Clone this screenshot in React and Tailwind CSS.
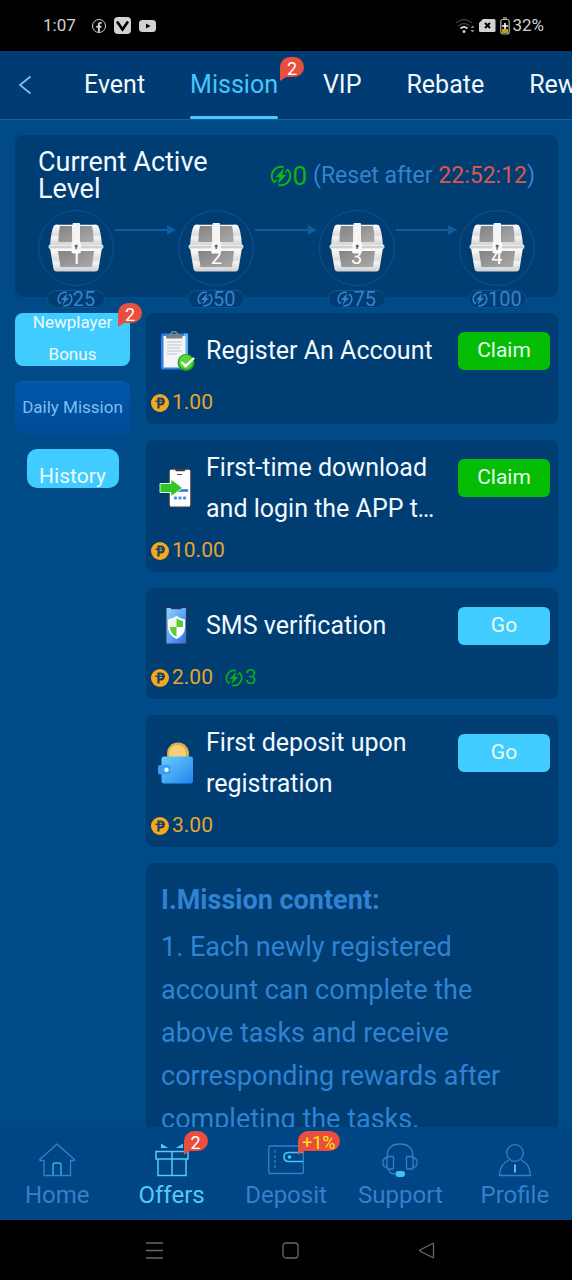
import React, { useState } from 'react';
import { FaFacebookF } from 'react-icons/fa';

const TABS = [
  { label: 'Event' },
  { label: 'Mission', badge: '2' },
  { label: 'VIP' },
  { label: 'Rebate' },
  { label: 'Rewards' },
];

const LEVELS = [
  { level: 1, points: 25 },
  { level: 2, points: 50 },
  { level: 3, points: 75 },
  { level: 4, points: 100 },
];

const MISSIONS = [
  { title: 'Register An Account', icon: ClipboardArt, cash: '1.00', action: 'Claim' },
  { title: 'First-time download and login the APP to get rewards', icon: LoginArt, cash: '10.00', action: 'Claim' },
  { title: 'SMS verification', icon: ShieldArt, cash: '2.00', points: 3, action: 'Go' },
  { title: 'First deposit upon registration', icon: WalletArt, cash: '3.00', action: 'Go' },
];

const NAV = [
  { label: 'Home', icon: HomeIcon },
  { label: 'Offers', icon: GiftIcon, badge: '2' },
  { label: 'Deposit', icon: DepositIcon, badge: '+1%' },
  { label: 'Support', icon: SupportIcon },
  { label: 'Profile', icon: ProfileIcon },
];

function Badge({ children, className = '' }) {
  return (
    <span
      className={`absolute flex h-5 min-w-6 items-center justify-center rounded-full rounded-bl-none bg-[#ea4e3d] px-1 pt-1 text-lg leading-5 after:absolute after:top-full after:left-0 after:h-1 after:w-1.5 after:bg-[#ea4e3d] after:[clip-path:polygon(0_0,100%_0,0_100%)] ${className}`}
    >
      {children}
    </span>
  );
}

function EnergyIcon({ className }) {
  return (
    <svg viewBox="0 0 20 20" className={className} fill="none" stroke="currentColor" strokeWidth="1.900">
      <path d="M12.300 1.900A8.500 8.500 0 0 0 4 16M7.700 18.100A8.500 8.500 0 0 0 16 4" />
      <path d="M12.800 2.800 5 11.200h3.800L7 17.200l8-8.400h-3.800z" fill="currentColor" stroke="none" />
      <path d="M3.600 16.400 6.200 13.200M16.400 3.600 13.800 6.800" strokeWidth="1.200" />
    </svg>
  );
}

function PesoCoin() {
  return (
    <svg viewBox="0 0 18 18" className="mr-[3px] size-[18px]">
      <circle cx="9" cy="9" r="9" fill="#f5a81c" />
      <path d="M7.500 14.500V4.500h2.300a2.900 2.900 0 0 1 0 5.800H7.500" fill="none" stroke="#17406a" strokeWidth="2.200" />
      <path d="M4.300 7.300H14" stroke="#17406a" strokeWidth="1.300" />
    </svg>
  );
}

function Chest({ id }) {
  return (
    <svg viewBox="0 0 56 50" className="h-[50px] w-14">
      <defs>
        <linearGradient id={`shell-${id}`} x1="0" y1="0" x2="0" y2="1">
          <stop offset="0" stopColor="#fff" />
          <stop offset="0.5" stopColor="#dcdcdc" />
          <stop offset="0.6" stopColor="#f4f4f4" />
          <stop offset="1" stopColor="#cfcfcf" />
        </linearGradient>
        <linearGradient id={`panel-${id}`} x1="0" y1="0" x2="1" y2="1">
          <stop offset="0" stopColor="#838383" />
          <stop offset="1" stopColor="#aaa" />
        </linearGradient>
      </defs>
      <path d="M6 2.500Q3 8 2 22.500h52Q53 8 50 2.500q-2-1.500-5-.8H11q-3-.7-5 .8z" fill={`url(#shell-${id})`} />
      <path d="M2 25h52l-3.500 21q-.7 2.500-3 2.500H8.500q-2.300 0-3-2.500z" fill={`url(#shell-${id})`} />
      <path d="M12 3h12v16H10.500Q10.500 9 12 3zM32 3h12q1.500 6 1.500 16H32z" fill={`url(#panel-${id})`} />
      <path d="M10 28h36l-2 16H12.500z" fill={`url(#panel-${id})`} />
      <rect x="0.500" y="21.500" width="55" height="4.500" rx="2" fill="#e9e9e9" />
      <path d="M1 24h54" stroke="#aaa" strokeWidth="0.800" />
      <rect x="24.500" width="7.500" height="22" rx="1" fill="#f4f4f4" />
      <rect x="23.500" y="18.500" width="9.500" height="12" rx="2" fill="#f8f8f8" />
      <circle cx="28.200" cy="23" r="1.600" fill="#666" />
      <path d="M28.200 23v4" stroke="#666" strokeWidth="1.400" />
    </svg>
  );
}

function ClipboardArt() {
  return (
    <svg viewBox="0 0 40 40" className="size-10 shrink-0">
      <rect x="5" y="2.500" width="27" height="36" rx="1.500" fill="#2f7fe6" />
      <path d="M28 2.500h3q1 0 1 1V32h-4z" fill="#59b3f8" />
      <path d="M7.500 5h22v27l-4 4.500h-18z" fill="#f4f4f6" />
      <path d="M11 11h15M11 14h15M11 17h13M11 20h15M11 23h10" stroke="#b9bcc4" strokeWidth="0.900" />
      <path d="M14.500 4a3.500 3.500 0 0 1 7 0" fill="none" stroke="#8d8a80" strokeWidth="1.500" />
      <rect x="10" y="3.500" width="16.500" height="4" rx="1" fill="#77808b" />
      <circle cx="30" cy="31.500" r="8.500" fill="#25a526" />
      <circle cx="30" cy="31" r="7" fill="#5dd33b" />
      <path d="m25.500 31 4 4 8.500-8" fill="none" stroke="#fff" strokeWidth="2.400" />
    </svg>
  );
}

function LoginArt() {
  return (
    <svg viewBox="0 0 40 40" className="size-10 shrink-0">
      <rect x="12.500" y="0.500" width="23" height="39.500" rx="3" fill="#333c4c" />
      <path d="M15 1.800h4l1 1.500h8.500l1-1.500H33q1.200 0 1.200 1.200v34q0 1.500-1.200 1.500H15q-1.200 0-1.200-1.500V3q0-1.200 1.200-1.200z" fill="#fdfdff" />
      <path d="M21 6.500h5" stroke="#555" strokeWidth="1" />
      <path d="M20 22.500h12" stroke="#3c72dc" strokeWidth="2.600" />
      <circle cx="19.500" cy="30" r="1.700" fill="#4c91ea" />
      <circle cx="24" cy="30" r="1.700" fill="#4c91ea" />
      <circle cx="28.500" cy="30" r="1.700" fill="#4c91ea" />
      <path d="M4 15.500h11V11L26.500 20 15 28.500V24.500H4z" fill="#34c424" stroke="#f2fff0" strokeWidth="0.900" />
    </svg>
  );
}

function ShieldArt() {
  return (
    <svg viewBox="0 0 40 40" className="size-10 shrink-0">
      <defs>
        <linearGradient id="sms-screen" x1="0" y1="0" x2="1" y2="1">
          <stop offset="0" stopColor="#8fd0fb" />
          <stop offset="0.500" stopColor="#5ca7f5" />
          <stop offset="1" stopColor="#356bdc" />
        </linearGradient>
      </defs>
      <rect x="9" y="0.500" width="22.500" height="39" rx="2.500" fill="#20365f" />
      <path d="M10.500 2h4l1 1.300h9.500L26 2h4v35.500H10.500z" fill="url(#sms-screen)" />
      <path d="M20.500 10q4 3 8.500 3.500V21q0 8-8.500 12-8.500-4-8.500-12v-7.500Q16.500 13 20.500 10z" fill="#fff" />
      <path d="M20.500 12.200V21H14v-6q3.500-.5 6.500-2.800z" fill="#e6f5e5" />
      <path d="M20.500 12.200q3 2.300 6.500 2.800v6h-6.500zM14 21h6.500v9.800Q14 27.500 14 21z" fill="#5ccc35" />
    </svg>
  );
}

function WalletArt() {
  return (
    <svg viewBox="0 0 40 42" className="h-[42px] w-10 shrink-0">
      <defs>
        <linearGradient id="wallet-body" x1="0" y1="0" x2="1" y2="1">
          <stop offset="0" stopColor="#69cefc" />
          <stop offset="1" stopColor="#2483f2" />
        </linearGradient>
      </defs>
      <circle cx="22" cy="11.500" r="11" fill="#e3ad4d" />
      <circle cx="21.500" cy="11.500" r="8.500" fill="#f5cf78" />
      <rect x="5.500" y="14.500" width="31.500" height="27" rx="2.500" fill="url(#wallet-body)" />
      <rect x="2" y="23" width="12.500" height="9.500" rx="2" fill="#3d9cf4" />
      <circle cx="10.500" cy="27.800" r="2.200" fill="#f2fbff" />
    </svg>
  );
}

function HomeIcon() {
  return (
    <svg viewBox="0 0 36 34" className="h-[34px] w-9" fill="none" stroke="currentColor" strokeWidth="1.300" strokeLinejoin="round">
      <path d="M18 1 .8 16.500q-.4 1 .6 1H5V32.500h26.500v-15H35q1 0 .4-1z" />
      <path d="M14 32V22q0-2 2-2h4q2 0 2 2v10" stroke="#41b8f4" />
    </svg>
  );
}

function GiftIcon() {
  return (
    <svg viewBox="0 0 36 34" className="h-[34px] w-9" fill="none" stroke="currentColor" strokeWidth="1.500">
      <path d="M2 8.500h32v7.500H2zM4 16h28v16.500H4zM18 8.500v24" />
      <path d="M7 .5 14 5H7zM29 .5 22 5h7z" fill="currentColor" stroke="none" />
    </svg>
  );
}

function DepositIcon() {
  return (
    <svg viewBox="0 0 36 34" className="h-[34px] w-9" fill="none" stroke="currentColor" strokeWidth="1.300">
      <rect x="0.800" y="3" width="34.500" height="27.500" rx="1" />
      <path d="M7 7v20" strokeDasharray="3 2" />
      <path d="M35 9.500H21q-5 0-5 4.500t5 4.500h14" stroke="#45c8fa" strokeWidth="1.600" />
      <circle cx="21.500" cy="14" r="1.800" fill="#45c8fa" stroke="none" />
    </svg>
  );
}

function SupportIcon() {
  return (
    <svg viewBox="0 0 36 34" className="h-[34px] w-9" fill="none" stroke="currentColor" strokeWidth="1.300">
      <path d="M5 14Q5 1 18 1t13 13M7 26q0 5 6 5" />
      <rect x="5" y="13.500" width="6.500" height="12.500" rx="1" />
      <rect x="24.500" y="13.500" width="6.500" height="12.500" rx="1" />
      <path d="M5 14.500q-4 .5-4 5t4 5M31 14.500q4 .5 4 5t-4 5" />
      <rect x="13.500" y="28" width="9.500" height="6" rx="3" fill="#45c0f6" stroke="none" />
    </svg>
  );
}

function ProfileIcon() {
  return (
    <svg viewBox="0 0 36 34" className="h-[34px] w-9" fill="none" stroke="currentColor" strokeWidth="1.300">
      <circle cx="18" cy="10" r="8.300" />
      <path d="M12 17Q3 21 2.500 32.500h31Q33 21 24 17" />
      <path d="M18 21.500v8" stroke="#45c0f6" strokeWidth="2" />
    </svg>
  );
}

function StatusBar() {
  return (
    <div className="flex h-[51px] shrink-0 items-center bg-black pr-7 pl-[43px] text-[17px] text-[#d2d2d2]">
      <span className="mr-4">1:07</span>
      <div className="flex items-center gap-2">
        <span className="flex size-3.5 items-end justify-center overflow-hidden rounded-full border border-[#d2d2d2]">
          <FaFacebookF size={10} />
        </span>
        <svg viewBox="0 0 17 17" className="size-[17px]">
          <rect width="17" height="17" rx="4" fill="#d2d2d2" />
          <path d="m3 4.500 5.500 8L14 4.500" fill="none" stroke="#000" strokeWidth="2.600" />
        </svg>
        <svg viewBox="0 0 17 12" className="h-3 w-[17px]">
          <rect width="17" height="12" rx="3.500" fill="#d2d2d2" />
          <path d="m7 3.500 4.500 2.500L7 8.500z" fill="#000" />
        </svg>
      </div>
      <div className="ml-auto flex items-center gap-1">
        <svg viewBox="0 0 20 16" className="h-4 w-5" fill="none" strokeWidth="1.600">
          <path d="M1 5q8-7 16 0M3.500 8q5.500-5 11 0" stroke="#3a3a3a" />
          <path d="M5.500 10.500q3.500-3 7 0" stroke="#d2d2d2" strokeWidth="2" />
          <circle cx="9" cy="13.500" r="1.500" fill="#d2d2d2" />
          <path d="m15.500 10 2-2.500 2 2.500zM15.500 12l2 2.500 2-2.500z" fill="#8a8a8a" />
        </svg>
        <svg viewBox="0 0 17 13" className="h-[13px] w-[17px]">
          <path d="M4 0h11q1.500 0 1.500 1.500v10q0 1.500-1.500 1.500H1.500Q0 13 0 11.500V4z" fill="#d2d2d2" />
          <path d="m6 4 5 5m0-5L6 9" stroke="#000" strokeWidth="2" />
        </svg>
        <svg viewBox="0 0 10 18" className="h-[18px] w-2.5">
          <path d="M3 1h4" stroke="#999" strokeWidth="1.500" />
          <rect x="0.800" y="2.500" width="8.400" height="14.500" rx="2" fill="none" stroke="#b5b5a5" strokeWidth="1.200" />
          <path d="M2 12h6v4H2z" fill="#b9a022" />
          <path d="M5 6v6M2 9h6" stroke="#fff" strokeWidth="1.600" />
        </svg>
        <span className="-ml-0.5">32%</span>
      </div>
    </div>
  );
}

function TabBar({ active, onChange }) {
  return (
    <header className="flex h-[69px] shrink-0 items-stretch border-b border-[#1c5c98] bg-[#003c73]">
      <button aria-label="Back" className="w-[62px] shrink-0 pl-[18px] text-[#7cbcf3]">
        <svg viewBox="0 0 14 20" className="h-5 w-3.5" fill="none" stroke="currentColor" strokeWidth="1.800">
          <path d="M12.500 1.500 2 10l10.500 8.500" />
        </svg>
      </button>
      <nav className="flex min-w-0 flex-1 gap-px overflow-hidden">
        {TABS.map((tab) => (
          <button
            key={tab.label}
            onClick={() => onChange(tab.label)}
            className={`relative shrink-0 px-[22px] text-[25px] ${tab.label === active ? 'text-[#45c6fc]' : 'text-[#f0f7fd]'}`}
          >
            {tab.label}
            {tab.badge && <Badge className="top-1.5 -right-1 text-white">{tab.badge}</Badge>}
            {tab.label === active && (
              <span className="absolute inset-x-[22px] bottom-0 h-[3px] rounded-full bg-[#41cbff]" />
            )}
          </button>
        ))}
      </nav>
    </header>
  );
}

function LevelCard() {
  return (
    <section className="h-[162px] rounded-lg bg-[#003d72] px-[23px] pt-3.5">
      <div className="flex h-[54px] items-center justify-between">
        <h2 className="w-48 text-[27px] leading-[27px] text-[#f2f9ff]">Current Active Level</h2>
        <div className="flex items-center text-[23px] whitespace-nowrap text-[#3782cc]">
          <EnergyIcon className="size-[22px] text-[#0bb714]" />
          <span className="mr-1.5 text-[26px] text-[#0bb714]">0</span>
          <span>
            (Reset after <span className="text-[#d9574f]">22:52:12</span>)
          </span>
        </div>
      </div>
      <ol className="mt-[7px] flex">
        {LEVELS.map((item, i) => (
          <React.Fragment key={item.level}>
            {i > 0 && (
              <li aria-hidden="true" className="mt-4 flex h-2 flex-1 items-center text-[#0e5ea4]">
                <span className="ml-px h-0.5 flex-1 bg-current" />
                <svg viewBox="0 0 9 10" className="mr-0.5 h-2.5 w-[9px]">
                  <path d="M0 0 9 5 0 10z" fill="currentColor" />
                </svg>
              </li>
            )}
            <li className="flex w-[76px] shrink-0 flex-col items-center">
              <div className="relative flex size-[76px] items-center justify-center rounded-full border border-[#11528d]">
                <Chest id={item.level} />
                <span className="absolute inset-x-0 top-[34px] text-center text-xl leading-6 text-white">{item.level}</span>
              </div>
              <div className="mt-1 flex h-[18px] min-w-[58px] items-center justify-center rounded-full border border-[#11528d] bg-[#003d72] text-xl text-[#3782cc]">
                <EnergyIcon className="size-4" />
                {item.points}
              </div>
            </li>
          </React.Fragment>
        ))}
      </ol>
    </section>
  );
}

function Sidebar() {
  return (
    <aside className="flex w-[115px] shrink-0 flex-col items-center gap-[15px] text-[17px]">
      <button className="relative flex h-[53px] w-full items-center justify-center rounded-lg bg-[#41ccff] pb-1 leading-8 text-[#eefaff]">
        <span className="px-3">Newplayer Bonus</span>
        <Badge className="-top-2.5 -right-3 text-white">2</Badge>
      </button>
      <button className="flex h-[53px] w-full items-center justify-center rounded-lg border-t border-[#0f5ca8] bg-linear-to-b from-[#0056aa] to-[#004c98] whitespace-nowrap text-[#7fbdf2]">
        Daily Mission
      </button>
      <button className="h-[39px] w-[92px] rounded-[10px] bg-[#41ccff] pt-3.5 text-[21px] leading-6 text-[#eefaff]">
        History
      </button>
    </aside>
  );
}

function MissionCard({ mission }) {
  const Art = mission.icon;
  return (
    <li className="rounded-lg bg-[#003d72] pt-[7px]">
      <div className="flex min-h-[61px] items-center pr-2 pl-2.5">
        <Art />
        <h3 className="ml-2.5 line-clamp-2 min-w-0 flex-1 text-[25px] leading-[41px] text-[#f2f9ff]">{mission.title}</h3>
        <button
          className={`mt-3 ml-4 h-[38px] w-[92px] shrink-0 self-start rounded-md text-[21px] text-[#e8fbee] ${mission.action === 'Claim' ? 'bg-[#05bd05]' : 'bg-[#41ccff]'}`}
        >
          {mission.action}
        </button>
      </div>
      <div className="flex h-[43px] items-center pl-[5px] text-[21px] text-[#e5a52e]">
        <PesoCoin />
        {mission.cash}
        {mission.points && (
          <span className="ml-3 flex items-center gap-0.5 text-[#0bab22]">
            <EnergyIcon className="size-[18px]" />
            {mission.points}
          </span>
        )}
      </div>
    </li>
  );
}

function BottomNav() {
  return (
    <nav className="flex h-[93px] shrink-0 bg-[#004584]">
      {NAV.map(({ label, icon: Icon, badge }) => (
        <a
          key={label}
          href={`#${label.toLowerCase()}`}
          className={`flex flex-1 flex-col items-center pt-4 text-2xl leading-8 ${label === 'Offers' ? 'text-[#52cbfb]' : 'text-[#3580cb]'}`}
        >
          <span className="relative mb-0.5">
            <Icon />
            {badge && (
              <Badge className={`-top-3 left-[30px] ${badge === '2' ? 'text-white' : 'text-[#ffe91f]'}`}>{badge}</Badge>
            )}
          </span>
          {label}
        </a>
      ))}
    </nav>
  );
}

function SystemBar() {
  return (
    <div className="flex h-[60px] shrink-0 items-center justify-center gap-[119px] bg-black pl-2 text-[#686868]">
      <button aria-label="Recent apps">
        <svg viewBox="0 0 17 17" className="size-[17px]" stroke="currentColor" strokeWidth="1.300">
          <path d="M0 1h17M0 8.500h17M0 16h17" />
        </svg>
      </button>
      <button aria-label="Home screen">
        <svg viewBox="0 0 17 17" className="size-[17px]" fill="none" stroke="currentColor" strokeWidth="1.300">
          <rect x="1" y="1" width="15" height="15" rx="3" />
        </svg>
      </button>
      <button aria-label="System back">
        <svg viewBox="0 0 17 17" className="size-[17px]" fill="none" stroke="currentColor" strokeWidth="1.300">
          <path d="M15.500 2v13q0 1-1 .5L2 9q-1-.5 0-1l12.500-6.500q1-.5 1 .5z" />
        </svg>
      </button>
    </div>
  );
}

export default function App() {
  const [tab, setTab] = useState('Mission');

  return (
    <div className="flex h-screen flex-col overflow-hidden bg-[#004b87] font-[Roboto,sans-serif]">
      <StatusBar />
      <TabBar active={tab} onChange={setTab} />
      <main className="min-h-0 flex-1 overflow-y-auto pt-[15px] pr-3.5 pl-[15px] [scrollbar-width:none]">
        <LevelCard />
        <div className="mt-4 flex gap-4">
          <Sidebar />
          <div className="flex min-w-0 flex-1 flex-col gap-4">
            <ul className="flex flex-col gap-4">
              {MISSIONS.map((m) => (
                <MissionCard key={m.title} mission={m} />
              ))}
            </ul>
            <section className="rounded-t-lg bg-[#003d72] px-[15px] pt-4 text-[27px] leading-[43px] text-[#2f83d2]">
              <h3 className="font-bold">I.Mission content:</h3>
              <p className="mt-1">
                1. Each newly registered account can complete the above tasks and receive corresponding rewards after
                completing the tasks.
              </p>
            </section>
          </div>
        </div>
      </main>
      <BottomNav />
      <SystemBar />
    </div>
  );
}
